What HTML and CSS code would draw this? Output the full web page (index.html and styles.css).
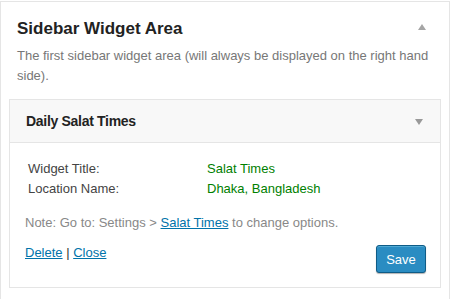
FILE: index.html
```html
<!DOCTYPE html>
<html>
<head>
<meta charset="utf-8">
<link rel="stylesheet" href="styles.css">
</head>
<body>
<div class="sidebar">
  <div class="sidebar-head">
    <h2 class="sidebar-title">Sidebar Widget Area</h2>
    <span class="arrow arrow-up"></span>
  </div>
  <p class="sidebar-desc">The first sidebar widget area (will always be displayed on the right hand side).</p>
  <div class="widget">
    <div class="widget-head">
      <h3 class="widget-title">Daily Salat Times</h3>
      <span class="arrow arrow-down"></span>
    </div>
    <div class="widget-body">
      <table class="info">
        <tr><td class="label">Widget Title:</td><td class="value">Salat Times</td></tr>
        <tr><td class="label">Location Name:</td><td class="value">Dhaka, Bangladesh</td></tr>
      </table>
      <p class="note">Note: Go to: Settings &gt; <a href="#">Salat Times</a> to change options.</p>
      <div class="actions">
        <div class="links"><a href="#">Delete</a> | <a href="#">Close</a></div>
        <button class="save">Save</button>
      </div>
    </div>
  </div>
</div>
</body>
</html>
```

FILE: styles.css
```css
html, body {
  margin: 0;
  padding: 0;
  background: #fff;
}
body {
  font-family: "Liberation Sans", Arial, sans-serif;
  font-size: 13px;
  color: #333;
  padding-top: 1px;
}
.sidebar {
  width: 448px;
  border: 1px solid #e5e5e5;
  border-bottom: none;
  height: 320px;
}
.sidebar-head {
  display: flex;
  align-items: center;
  justify-content: space-between;
  padding: 15px 23px 0 16px;
  height: 24px;
}
.sidebar-title {
  margin: 0;
  font-size: 17px;
  font-weight: bold;
  color: #222;
  line-height: 24px;
}
.arrow {
  width: 0;
  height: 0;
  border-left: 4px solid transparent;
  border-right: 4px solid transparent;
}
.arrow-up {
  border-bottom: 6px solid #a5a5a5;
  margin-top: -5px;
}
.arrow-down {
  border-top: 6px solid #999;
  margin-top: 2px;
}
.sidebar-desc {
  margin: 0;
  padding: 5px 16px 0 16px;
  color: #777;
  line-height: 19.5px;
  font-size: 13px;
}
.widget {
  margin: 14px 8px 0 8px;
  border: 1px solid #e5e5e5;
}
.widget-head {
  display: flex;
  align-items: center;
  justify-content: space-between;
  height: 42px;
  padding: 0 17px 0 16px;
  background: #f8f8f8;
  border-bottom: 1px solid #e5e5e5;
}
.widget-title {
  margin: 0;
  font-size: 14px;
  font-weight: bold;
  letter-spacing: -0.3px;
  color: #222;
}
.widget-body {
  padding: 16px 14px 14px 15px;
}
.info {
  border-collapse: separate;
  border-spacing: 2px 0;
  margin-left: 0;
}
.info td {
  padding: 1px;
  line-height: 18px;
  color: #444;
}
.info .label {
  width: 175px;
}
.info .value {
  color: #008000;
}
.note {
  margin: 15px 0 0 0;
  color: #888;
  line-height: 18px;
}
a {
  color: #0073aa;
  text-decoration: underline;
}
.actions {
  display: flex;
  justify-content: space-between;
  align-items: flex-start;
  margin-top: 12px;
}
.links {
  color: #333;
  line-height: 18px;
}
.save {
  margin-top: 1px;
  width: 50px;
  height: 28px;
  padding: 0;
  font-family: "Liberation Sans", Arial, sans-serif;
  font-size: 13px;
  color: #fff;
  background: #2a8cc2;
  border: 1px solid #0f5c87;
  border-radius: 3px;
  box-shadow: 0 1px 1px rgba(0,0,0,0.3), inset 0 1px 0 rgba(120,200,230,0.5);
}
```
